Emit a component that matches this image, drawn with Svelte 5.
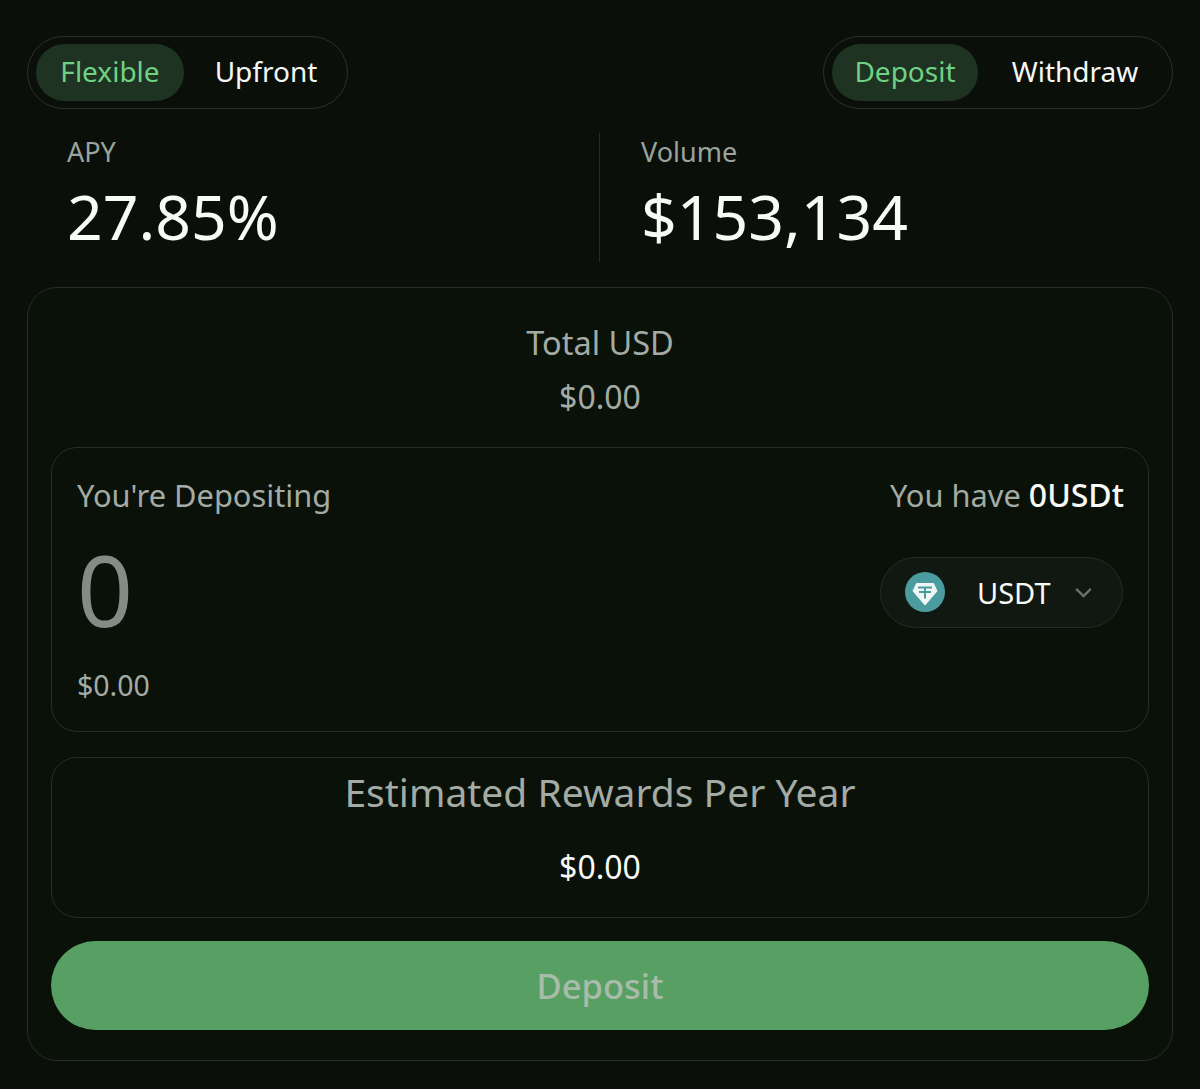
<script>
  const modes = ['Flexible', 'Upfront'];
  const actions = ['Deposit', 'Withdraw'];
</script>

<main class="page">
  <div class="tabs">
    <div class="toggle left">
      {#each modes as mode, i}
        <span class="opt" class:active={i === 0}>{mode}</span>
      {/each}
    </div>
    <div class="toggle right">
      {#each actions as action, i}
        <span class="opt" class:active={i === 0}>{action}</span>
      {/each}
    </div>
  </div>

  <div class="stats">
    <div class="stat first">
      <div class="statLabel">APY</div>
      <div class="statValue">27.85%</div>
    </div>
    <div class="stat second">
      <div class="statLabel">Volume</div>
      <div class="statValue">$153,134</div>
    </div>
  </div>

  <section class="card">
    <div class="total">
      <div class="totalLabel">Total USD</div>
      <div class="totalValue">$0.00</div>
    </div>

    <div class="panel input">
      <div class="row">
        <span class="muted">You're Depositing</span>
        <span class="muted have">You have <b>0USDt</b></span>
      </div>
      <div class="row amountRow">
        <span class="amount">0</span>
        <div class="token">
          <svg class="tokenIcon" viewBox="0 0 40 40" width="40" height="40">
            <circle cx="20" cy="20" r="20" fill="#4b9c9f" />
            <path d="M11.500 11.500h17l3.500 7.500L20 33 8 19z" fill="#f2f7f5" stroke="#f2f7f5" stroke-width="1" stroke-linejoin="round" />
            <path d="M13 15.500h14M20 15.500v11M14 20h12" stroke="#4b9c9f" stroke-width="2" fill="none" />
          </svg>
          <span class="tokenName">USDT</span>
          <svg class="chevron" viewBox="0 0 20 12" width="19" height="11">
            <path d="M2 2l8 8 8-8" stroke="#66726a" stroke-width="2.500" fill="none" />
          </svg>
        </div>
      </div>
      <div class="usd">$0.00</div>
    </div>

    <div class="panel rewards">
      <div class="rewardsTitle">Estimated Rewards Per Year</div>
      <div class="rewardsValue">$0.00</div>
    </div>

    <button class="submit">Deposit</button>
  </section>
</main>

<style>
  :global(body) {
    background: #0a0f0a;
    font-family: "Noto Sans", "Open Sans", sans-serif;
  }

  .page {
    height: 1089px;
    box-sizing: border-box;
    padding: 36px 27px 0;
    display: flex;
    flex-direction: column;
    color: #fff;
  }

  .tabs {
    display: flex;
    justify-content: space-between;
  }

  .toggle {
    height: 73px;
    box-sizing: border-box;
    display: flex;
    align-items: center;
    padding-left: 8px;
    border: 1px solid #2a322b;
    border-radius: 37px;
    font-size: 28px;
  }

  .left { width: 321px; }
  .right { width: 350px; }

  .opt {
    flex: none;
    height: 57px;
    box-sizing: border-box;
    padding-bottom: 4px;
    display: flex;
    align-items: center;
    justify-content: center;
    border-radius: 29px;
    color: #f4f7f4;
  }

  .left .opt:first-child { width: 148px; }
  .left .opt:last-child { width: 164px; }
  .right .opt:first-child { width: 146px; }
  .right .opt:last-child { width: 194px; }

  .opt.active {
    background: #1f3322;
    color: #6fd185;
  }

  .stats {
    height: 129px;
    margin-top: 24px;
    display: flex;
  }

  .stat {
    width: 50%;
    box-sizing: border-box;
  }

  .first {
    padding-left: 40px;
    border-right: 1px solid #252c26;
  }

  .second { padding-left: 41px; }

  .statLabel {
    font-size: 27px;
    line-height: 38px;
    color: #9ba39c;
  }

  .statValue {
    margin-top: 7px;
    font-size: 62.500px;
    line-height: 76px;
    color: #f7faf7;
  }

  .card {
    margin-top: 25px;
    height: 774px;
    box-sizing: border-box;
    padding: 35px 23px 0;
    border: 1px solid #262e27;
    border-radius: 30px;
    background: #091109;
    display: flex;
    flex-direction: column;
  }

  .total {
    text-align: center;
    height: 124px;
    color: #a3aba4;
  }

  .totalLabel {
    font-size: 32.500px;
    line-height: 40px;
  }

  .totalValue {
    margin-top: 14px;
    font-size: 32px;
    line-height: 40px;
  }

  .panel {
    border: 1px solid #262e27;
    border-radius: 26px;
    box-sizing: border-box;
  }

  .input {
    height: 285px;
    padding: 27px 24px 0 25px;
  }

  .row {
    display: flex;
    justify-content: space-between;
    align-items: center;
  }

  .muted {
    font-size: 30.800px;
    line-height: 40px;
    color: #a3aba4;
  }

  .have b {
    font-size: 32px;
    font-weight: 500;
    color: #f7faf7;
  }

  .amountRow {
    margin-top: 31px;
    height: 92px;
  }

  .amount {
    margin-bottom: 6px;
    font-size: 98px;
    line-height: 92px;
    color: #848c85;
  }

  .token {
    width: 243px;
    height: 71px;
    box-sizing: border-box;
    margin-right: 1px;
    padding: 0 29px 0 24px;
    display: flex;
    align-items: center;
    border: 1px solid #242c25;
    border-radius: 36px;
    background: #101811;
  }

  .tokenName {
    margin-left: 32px;
    font-size: 29px;
    flex: 1;
    color: #f7faf7;
  }

  .usd {
    margin-top: 28px;
    font-size: 28.500px;
    line-height: 38px;
    color: #a3aba4;
  }

  .rewards {
    margin-top: 25px;
    height: 161px;
    text-align: center;
  }

  .rewardsTitle {
    margin-top: 8px;
    font-size: 39px;
    line-height: 52px;
    color: #a3aba4;
  }

  .rewardsValue {
    margin-top: 29px;
    font-size: 32px;
    line-height: 40px;
    color: #f7faf7;
  }

  .submit {
    margin-top: 23px;
    height: 89px;
    border: 0;
    border-radius: 45px;
    background: #589f63;
    color: #a9bcab;
    font-family: inherit;
    font-size: 34.500px;
    font-weight: 500;
  }
</style>
